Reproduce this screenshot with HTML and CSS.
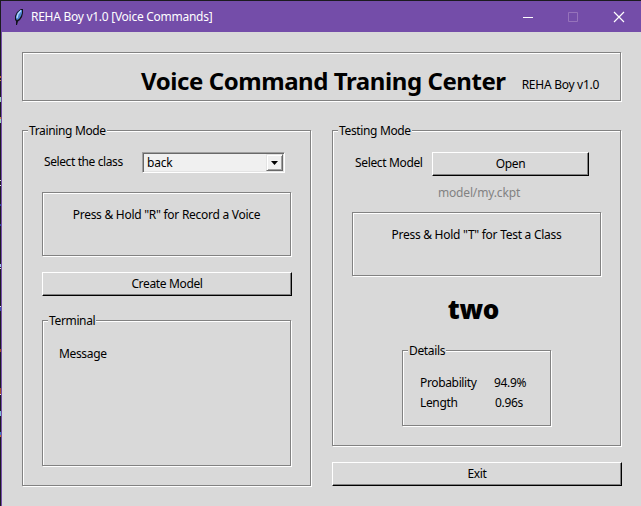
FILE: index.html
```html
<!DOCTYPE html>
<html lang="en">
<head>
<meta charset="utf-8">
<title>REHA Boy v1.0 [Voice Commands]</title>
<link rel="stylesheet" href="styles.css">
</head>
<body>
<div class="window">
  <header class="titlebar">
    <svg class="feather" width="10" height="16" viewBox="0 0 10 16">
      <path d="M7 0H9V4L8 8 6 11 4 12.500 3 16H2V12L1 11V7L3 3Z" fill="#10131c"/>
      <path d="M7 1H8V4L7 7 5 10 3 11 2 10V7L4 3Z" fill="#4b82d0"/>
      <path d="M7 1.500 4 5 3 9" fill="none" stroke="#b9dcff" stroke-width="1.300"/>
    </svg>
    <span class="caption">REHA Boy v1.0 [Voice Commands]</span>
    <svg class="controls" width="102" height="12" viewBox="0 0 102 12" fill="none">
      <path d="M0 6.500H10" stroke="#fff"/>
      <path d="M45.500 1.500h9v9h-9z" stroke="#9673bb"/>
      <path d="M91 1 101 11M101 1 91 11" stroke="#fff" stroke-width="1.200"/>
    </svg>
  </header>
  <main class="content">
    <section class="groove banner">
      <h1>Voice Command Traning Center</h1>
      <span class="version">REHA Boy v1.0</span>
    </section>
    <div class="columns">
      <section class="groove training">
        <span class="legend">Training Mode</span>
        <div class="class-row">
          <span class="class-label">Select the class</span>
          <div class="combo"><span class="value">back</span><span class="arrow"><svg width="7" height="4" viewBox="0 0 7 4"><path d="M0 0H7L3.500 4Z"/></svg></span></div>
        </div>
        <div class="groove prompt"><span class="record-text">Press &amp; Hold "R" for Record a Voice</span></div>
        <button class="create"><span>Create Model</span></button>
        <section class="groove terminal">
          <span class="legend">Terminal</span>
          <span class="message">Message</span>
        </section>
      </section>
      <div class="right">
        <section class="groove testing">
          <span class="legend">Testing Mode</span>
          <div class="model-row">
            <span class="model-label">Select Model</span>
            <button class="open"><span>Open</span></button>
          </div>
          <div class="path"><span>model/my.ckpt</span></div>
          <div class="groove prompt"><span class="test-text">Press &amp; Hold "T" for Test a Class</span></div>
          <div class="result"><span>two</span></div>
          <section class="groove details">
            <span class="legend">Details</span>
            <span class="prob">Probability</span><span class="prob-value">94.9%</span>
            <span class="len">Length</span><span class="len-value">0.96s</span>
          </section>
        </section>
        <button class="exit"><span>Exit</span></button>
      </div>
    </div>
  </main>
</div>
</body>
</html>
```
FILE: styles.css
```css
* { box-sizing: border-box; }
body {
  margin: 0;
  width: 641px;
  height: 506px;
  overflow: hidden;
  /* the editor behind the window shows along its left edge */
  background: linear-gradient(#1b1b1f 76px, #c06a30 76px 78px, #1b1b1f 78px 80px, #d08a40 80px 81px, #1b1b1f 81px 97px, #9fd8c0 97px 102px, #1b1b1f 102px 117px, #d08a40 117px 119px, #9fd8c0 119px 123px, #1b1b1f 123px 180px, #ddd 180px 181px, #1b1b1f 181px 185px, #ddd 185px 186px, #1b1b1f 186px 204px, #2b479c 204px 206px, #1b1b1f 206px 224px, #2b479c 224px 226px, #1b1b1f 226px 264px, #9cc4e8 264px 267px, #1b1b1f 267px 268px, #ddd 268px 269px, #1b1b1f 269px 306px, #ddd 306px 307px, #3b50b0 307px 311px, #1b1b1f 311px 349px, #a04a20 349px 352px, #1b1b1f 352px 388px, #a04a20 388px 394px, #ddd 394px 395px, #1b1b1f 395px 411px, #7fc0d8 411px 416px, #1b1b1f 416px 432px, #3a7fc0 432px 435px, #c06a30 435px 437px, #1b1b1f 437px);
  color: #000;
  font: 12px/16px "Noto Sans", "Open Sans", sans-serif;
  letter-spacing: -0.35px;
  white-space: nowrap;
}
.window {
  height: 505px;
  margin: 1px 0 0 1px;
  border-left: 1px solid #744da9;
  background: #d9d9d9;
}
.titlebar {
  display: flex;
  align-items: center;
  height: 31px;
  padding: 0 16px 0 12px;
  background: #744da9;
  color: #fff;
}
.caption { margin-left: 7px; letter-spacing: -0.27px; }
.controls { margin-left: auto; }
.content { padding: 20px; }
.groove {
  border: 1px solid #828282;
  box-shadow: 1px 1px #fff, inset 1px 1px #fff;
  position: relative;
}
.banner {
  display: flex;
  width: 599px;
  height: 49px;
  padding: 14px 0 0 118px;
}
h1 {
  margin: 0;
  font: bold 24px/28px "Noto Sans", sans-serif;
  letter-spacing: -0.43px;
}
.version { margin: 10px 0 0 16px; letter-spacing: -0.27px; }
.columns { display: flex; gap: 21px; margin-top: 29px; }
.training { width: 289px; height: 356px; padding: 21px 19px; }
.right { display: flex; flex-direction: column; gap: 16px; }
.testing { width: 289px; height: 316px; padding: 21px 19px; }
.legend {
  position: absolute;
  left: 5px;
  top: -8px;
  padding: 0 1px;
  background: #d9d9d9;
}
.class-row { display: flex; height: 40px; }
.class-label { width: 100px; padding: 2px 0 0 2px; letter-spacing: -0.4px; }
.combo {
  display: flex;
  width: 143px;
  height: 21px;
  border: 1px solid;
  border-color: #a0a0a0 #fff #fff #a0a0a0;
  background: #f0f0f0;
  box-shadow: inset 1px 1px #696969, inset -1px -1px #e3e3e3;
}
.value { flex: 1; padding: 2px 0 0 4px; letter-spacing: -0.2px; }
.arrow {
  display: flex;
  align-items: center;
  justify-content: center;
  width: 17px;
  height: 17px;
  margin: 1px;
  border: 1px solid;
  border-color: #e3e3e3 #696969 #696969 #e3e3e3;
  box-shadow: inset 1px 1px #fff, inset -1px -1px #a0a0a0;
}
.prompt {
  width: 249px;
  height: 64px;
  padding-top: 14px;
  text-align: center;
  letter-spacing: -0.27px;
}
button {
  display: block;
  height: 24px;
  padding: 0;
  border: 1px solid;
  border-color: #fff #000 #000 #fff;
  border-radius: 0;
  background: #d9d9d9;
  box-shadow: inset -1px -1px #828282;
  color: inherit;
  font: inherit;
  letter-spacing: inherit;
}
.create { width: 250px; margin: 16px 0 24px; }
.terminal { width: 249px; height: 146px; padding: 25px 16px; }
.model-row { display: flex; height: 33px; }
.model-label { width: 80px; padding: 3px 0 0 3px; }
.open { width: 157px; }
.path {
  height: 27px;
  padding-left: 5px;
  text-align: center;
  color: #828282;
  letter-spacing: -0.15px;
}
.result {
  height: 74px;
  padding: 17px 6px 0 0;
  text-align: center;
  font: 900 26px/32px "Noto Sans", sans-serif;
  letter-spacing: -0.3px;
}
.details {
  display: grid;
  grid-template-columns: 74px 1fr;
  grid-auto-rows: 20px;
  width: 149px;
  height: 76px;
  margin-left: 50px;
  padding: 24px 0 0 17px;
}
.len-value { padding-left: 1px; }
.exit { width: 290px; }
```
